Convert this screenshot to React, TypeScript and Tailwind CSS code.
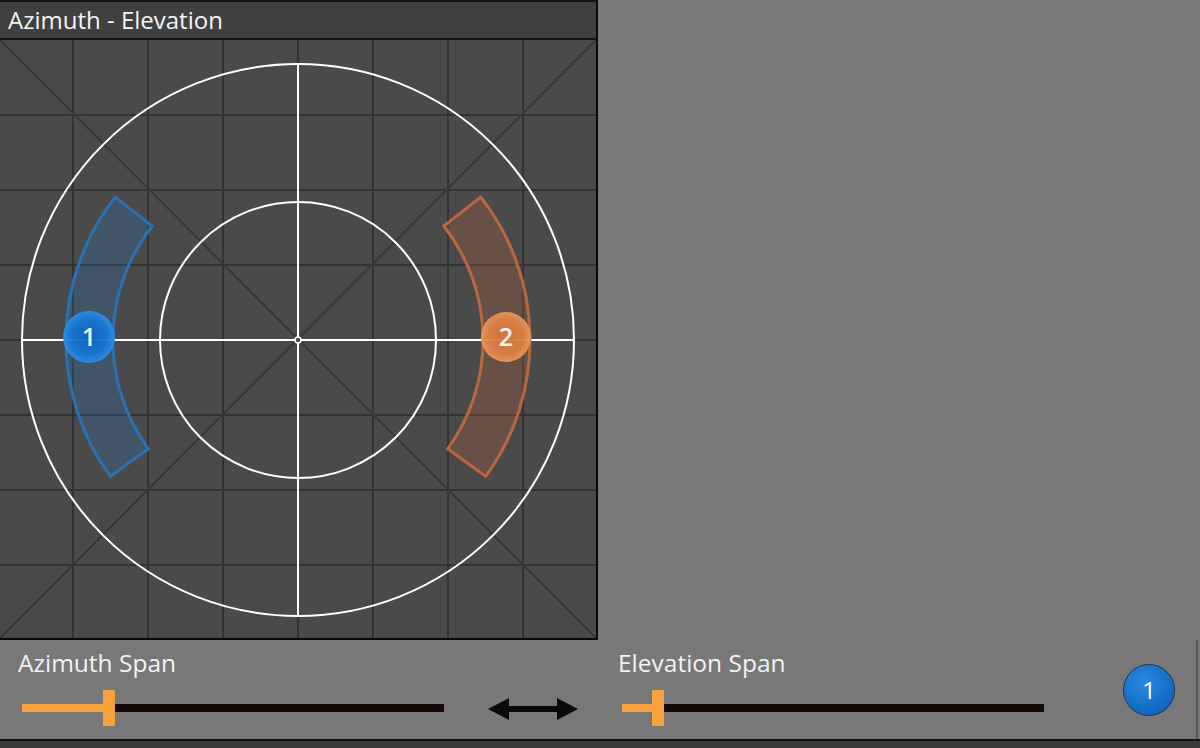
import React from 'react';

const font = { fontFamily: '"Open Sans", "Liberation Sans", sans-serif' };

const GRID = [73, 148, 223, 298, 373, 448, 523];
const GRID_Y = [75, 150, 225, 300, 375, 450, 525];

function Marker({ cx, cy, r, id, label }: { cx: number; cy: number; r: number; id: string; label: string }) {
  return (
    <g opacity={0.93}>
      <circle cx={cx} cy={cy} r={r} fill={`url(#${id})`} />
      <text
        x={cx}
        y={cy + 9}
        textAnchor="middle"
        fill="#ffffff"
        fontSize="25"
        fontWeight="600"
        style={font}
      >
        {label}
      </text>
    </g>
  );
}

function AzElCanvas() {
  const cx = 298;
  const cy = 300;
  return (
    <svg width="596" height="598" viewBox="0 0 596 598" className="block">
      <defs>
        <radialGradient id="blueMark" cx="50%" cy="50%" r="50%">
          <stop offset="0%" stopColor="#0b66c2" />
          <stop offset="70%" stopColor="#1678d6" />
          <stop offset="100%" stopColor="#2e90ea" />
        </radialGradient>
        <radialGradient id="orangeMark" cx="50%" cy="50%" r="50%">
          <stop offset="0%" stopColor="#d7773b" />
          <stop offset="70%" stopColor="#df8243" />
          <stop offset="100%" stopColor="#ee9a5c" />
        </radialGradient>
      </defs>

      {/* grid */}
      {GRID.map((x) => (
        <line key={`v${x}`} x1={x} y1={0} x2={x} y2={598} stroke="#333333" strokeWidth="2" />
      ))}
      {GRID_Y.map((y) => (
        <line key={`h${y}`} x1={0} y1={y} x2={596} y2={y} stroke="#333333" strokeWidth="2" />
      ))}
      <line x1={0} y1={0} x2={596} y2={598} stroke="#373737" strokeWidth="2" />
      <line x1={596} y1={0} x2={0} y2={598} stroke="#373737" strokeWidth="2" />

      {/* rings and crosshair */}
      <circle cx={cx} cy={cy} r={276} fill="none" stroke="#ffffff" strokeWidth="2" />
      <circle cx={cx} cy={cy} r={138} fill="none" stroke="#ffffff" strokeWidth="2" />
      <line x1={22} y1={cy} x2={574} y2={cy} stroke="#ffffff" strokeWidth="2" />
      <line x1={cx} y1={24} x2={cx} y2={576} stroke="#ffffff" strokeWidth="2" />
      <circle cx={cx} cy={cy} r={3} fill="#4a4a4a" stroke="#ffffff" strokeWidth="1.5" />

      {/* span bands */}
      <path
        d="M115.2 157.1 A232 232 0 0 0 110.3 436.4 L148.3 408.8 A185 185 0 0 1 152.2 186 Z"
        fill="rgba(45,115,180,0.28)"
        stroke="#2872b4"
        strokeWidth="3"
        strokeLinejoin="miter"
      />
      <path
        d="M480.8 157.1 A232 232 0 0 1 485.7 436.4 L447.7 408.8 A185 185 0 0 0 443.8 186 Z"
        fill="rgba(190,105,60,0.25)"
        stroke="#b8683c"
        strokeWidth="3"
        strokeLinejoin="miter"
      />

      <Marker cx={89} cy={297} r={26} id="blueMark" label="1" />
      <Marker cx={506} cy={297} r={25} id="orangeMark" label="2" />
    </svg>
  );
}

function SpanSlider({ label, fill }: { label: string; fill: number }) {
  return (
    <div className="flex flex-col w-[426px]">
      <div className="text-[24.5px] leading-[28px] text-[#f2f2f2] pt-[9px]" style={font}>
        {label}
      </div>
      <div className="relative ml-[4px] mt-[13px] w-[422px] h-[36px]">
        <div className="absolute left-0 right-0 top-[14px] h-[8px] bg-[#120a06]" />
        <div className="absolute left-0 top-[14px] h-[8px] bg-[#f7a23c]" style={{ width: fill }} />
        <div className="absolute top-0 h-[36px] w-[12px] bg-[#f7a23c]" style={{ left: fill }} />
      </div>
    </div>
  );
}

export default function App() {
  return (
    <div className="w-[1200px] h-[748px] bg-[#787878] flex flex-col overflow-hidden">
      <div className="flex h-[640px]">
        <div className="w-[598px] flex flex-col border-r-2 border-[#0a0a0a] bg-[#4a4a4a]">
          <div
            className="h-[40px] bg-[#404040] border-t-2 border-b-2 border-[#141414] flex items-center pl-[8px] text-[24px] text-[#f4f4f4]"
            style={font}
          >
            Azimuth - Elevation
          </div>
          <div className="border-b-2 border-[#0a0a0a]">
            <AzElCanvas />
          </div>
        </div>
        <div className="flex-1" />
      </div>

      <div className="flex-1 flex items-start pl-[18px] border-r-2 border-[#555555] mr-[2px]">
        <SpanSlider label="Azimuth Span" fill={81} />
        <svg width="90" height="22" viewBox="0 0 90 22" className="ml-[44px] mt-[58px]">
          <polygon points="0,11 21,0 21,8 69,8 69,0 90,11 69,22 69,14 21,14 21,22" fill="#0a0a0a" />
        </svg>
        <div className="ml-[40px]">
          <SpanSlider label="Elevation Span" fill={30} />
        </div>
        <div
          className="ml-[79px] mt-[24px] w-[52px] h-[52px] rounded-full border-[1.5px] border-[#1d3550] bg-[radial-gradient(circle_at_40%_35%,#2a8ae0_0%,#1670c8_55%,#0d5aa8_100%)] flex items-center justify-center text-white text-[24px]"
          style={font}
        >
          1
        </div>
      </div>

      <div className="h-[9px] border-t-2 border-[#111111] bg-[#3a3a3a]" />
    </div>
  );
}
